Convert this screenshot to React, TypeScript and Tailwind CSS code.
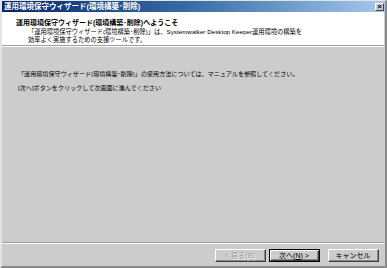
const FONT = "font-['Liberation_Sans','Noto_Sans_CJK_JP',sans-serif]";

function Btn({ label, disabled, primary }: { label: React.ReactNode; disabled?: boolean; primary?: boolean }) {
  return (
    <div className={`w-[51px] h-[13px] ${primary ? "border border-[#000]" : ""}`}>
      <div className="w-full h-full border-t border-l border-t-white border-l-white border-b border-r border-b-[#404040] border-r-[#404040] bg-[#cccccc]">
        <div
          className={`w-full h-full flex items-center justify-center border-b border-r border-b-[#8a8a8a] border-r-[#8a8a8a] text-[7px] leading-none ${
            disabled ? "text-[#9a9a9a] [text-shadow:1px_1px_0_#fff]" : "text-black"
          }`}
        >
          {label}
        </div>
      </div>
    </div>
  );
}

export default function App() {
  return (
    <div className={`w-[387px] h-[268px] flex flex-col bg-[#cccccc] ${FONT} border-t border-l-2 border-t-[#e4e4e4] border-l-[#e4e4e4] border-r-2 border-b-2 border-r-[#8c8c8c] border-b-[#8c8c8c] overflow-hidden`}>
      {/* title bar */}
      <div className="h-[11px] flex items-center justify-between bg-gradient-to-r from-[#0a246a] via-[#3a6ea5] to-[#a6caf0] pl-[2px] pr-[1px]">
        <span className="text-white font-bold text-[7.5px] leading-none whitespace-nowrap">運用環境保守ウィザード(環境構築･削除)</span>
        <div className="w-[9px] h-[8px] bg-[#cccccc] border-t border-l border-white border-b border-r border-b-[#404040] border-r-[#404040] flex items-center justify-center text-[8px] leading-none font-bold text-black">
          ×
        </div>
      </div>

      {/* header */}
      <div className="h-[34px] bg-white border-b border-b-[#a0a0a0] pl-[14px] pt-[7px] mr-[1px]">
        <div className="font-bold text-[7px] leading-[8px] whitespace-nowrap text-black">運用環境保守ウィザード(環境構築･削除)へようこそ</div>
        <div className="pl-[12px] pt-[1px] text-[6.25px] leading-[8px] whitespace-nowrap text-black">
          <div>「運用環境保守ウィザード(環境構築･削除)」は、Systemwalker Desktop Keeper運用環境の構築を</div>
          <div>効率よく実施するための支援ツールです。</div>
        </div>
      </div>
      <div className="h-px bg-white mr-[1px]" />

      {/* body */}
      <div className="flex-1 pl-[16px] pt-[23px] text-[6.1px] leading-[8px] whitespace-nowrap text-black">
        <div>「運用環境保守ウィザード(環境構築･削除)」の使用方法については、マニュアルを参照してください。</div>
        <div className="pt-[6px]">[次へ]ボタンをクリックして次画面に進んでください</div>
      </div>

      {/* footer */}
      <div className="h-px bg-[#a0a0a0] mr-[1px]" />
      <div className="h-px bg-white mr-[1px]" />
      <div className="h-[22px] flex items-start justify-end pt-[5px] pr-[6px]">
        <Btn label="< 戻る(B)" disabled />
        <div className="w-[3px]" />
        <Btn primary label={<span>次へ(<span className="underline">N</span>) &gt;</span>} />
        <div className="w-[8px]" />
        <Btn label="キャンセル" />
      </div>
    </div>
  );
}
